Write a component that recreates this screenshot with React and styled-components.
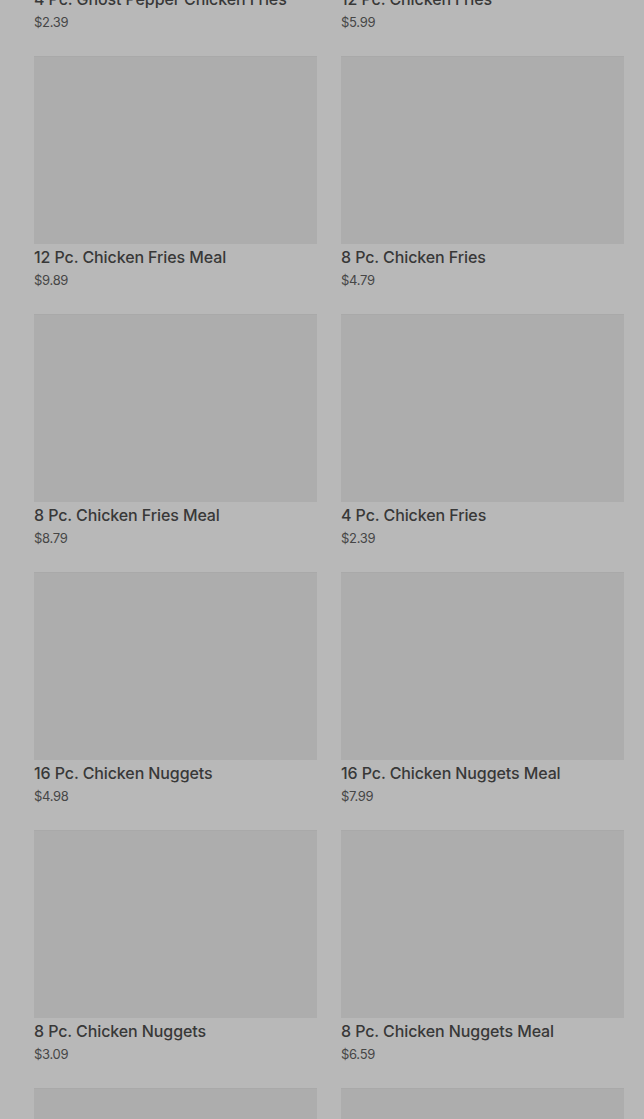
import React from 'react'
import styled, { createGlobalStyle } from 'styled-components';

const GlobalStyle = createGlobalStyle`
    html, body {
        margin: 0;
        padding: 0;
        background: #b8b8b8;
        font-family: Inter, "Noto Sans", "Liberation Sans", sans-serif;
        overflow: hidden;
    }
`;

const items = [
    { name: '4 Pc. Ghost Pepper Chicken Fries', price: '$2.39' },
    { name: '12 Pc. Chicken Fries', price: '$5.99' },
    { name: '12 Pc. Chicken Fries Meal', price: '$9.89' },
    { name: '8 Pc. Chicken Fries', price: '$4.79' },
    { name: '8 Pc. Chicken Fries Meal', price: '$8.79' },
    { name: '4 Pc. Chicken Fries', price: '$2.39' },
    { name: '16 Pc. Chicken Nuggets', price: '$4.98' },
    { name: '16 Pc. Chicken Nuggets Meal', price: '$7.99' },
    { name: '8 Pc. Chicken Nuggets', price: '$3.09' },
    { name: '8 Pc. Chicken Nuggets Meal', price: '$6.59' },
    { name: '10 Pc. Chicken Nuggets', price: '$1.99' },
    { name: '10 Pc. Chicken Nuggets Meal', price: '$5.49' },
];

function App() {
    return (
        <>
            <GlobalStyle />
            <MenuGridStyled>
                {items.map((item, i) => (
                    <Card key={i}>
                        <Thumb />
                        <Title>{item.name}</Title>
                        <Price>{item.price}</Price>
                    </Card>
                ))}
            </MenuGridStyled>
        </>
    )
}

const MenuGridStyled = styled.div`
    display: grid;
    grid-template-columns: 283px 283px;
    column-gap: 24px;
    row-gap: 24px;
    margin-top: -202px;
    padding: 0 20px 0 34px;
`;

const Card = styled.div`
    display: flex;
    flex-direction: column;
`;

const Thumb = styled.div`
    height: 188px;
    background: #adadad;
    border-top: 1px solid #a9a9a9;
    box-sizing: border-box;
`;

const Title = styled.div`
    margin-top: 3px;
    font-size: 16px;
    line-height: 20px;
    font-weight: 500;
    color: #383838;
    letter-spacing: -0.1px;
    white-space: nowrap;
`;

const Price = styled.div`
    margin-top: 3px;
    font-size: 13px;
    line-height: 20px;
    color: #464646;
    letter-spacing: -0.3px;
`;

export default App;
